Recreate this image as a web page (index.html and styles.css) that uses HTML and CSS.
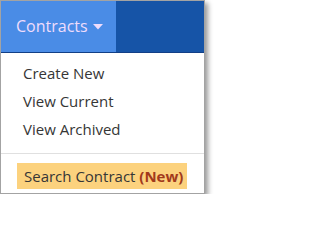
FILE: index.html
```html
<!DOCTYPE html>
<html>
<head>
<meta charset="utf-8">
<link rel="stylesheet" href="styles.css">
</head>
<body>
<div class="frame">
  <div class="navbar">
    <div class="nav-item">
      <span class="nav-label">Contracts</span>
      <svg class="caret" width="10" height="6" viewBox="0 0 10 6"><path d="M0 0H10L5 5.5Z" fill="#efdcfc"/></svg>
    </div>
    <div class="nav-rest"></div>
  </div>
  <ul class="menu">
    <li class="menu-item">Create New</li>
    <li class="menu-item">View Current</li>
    <li class="menu-item">View Archived</li>
  </ul>
  <div class="divider"></div>
  <div class="special">
    <span class="highlight">Search Contract <b class="new">(New)</b></span>
  </div>
</div>
</body>
</html>
```
FILE: styles.css
```css
html, body {
  margin: 0;
  padding: 0;
  background: #ffffff;
}
body {
  font-family: "Open Sans", "DejaVu Sans", sans-serif;
}
.frame {
  width: 203px;
  border: 1px solid #a3a3a3;
  background: #ffffff;
  box-shadow: 3px 3px 5px rgba(0, 0, 0, 0.4);
}
.navbar {
  display: flex;
  height: 51px;
  border-bottom: 1px solid #123f86;
}
.nav-item {
  width: 115px;
  background: #4a8ce6;
  display: flex;
  align-items: center;
  padding-left: 15px;
  box-sizing: border-box;
  gap: 5px;
}
.nav-label {
  color: #efdcfc;
  font-size: 16px;
  line-height: 20px;
  margin-top: -1px;
}
.nav-rest {
  flex: 1;
  background: #1654a7;
}
.menu {
  list-style: none;
  margin: 0;
  padding: 6px 0 0 22px;
}
.menu-item {
  font-size: 15px;
  line-height: 28px;
  color: #363636;
}
.divider {
  margin-top: 10px;
  height: 1px;
  background: #e0e0e0;
}
.special {
  padding: 9px 0 4px 16px;
}
.highlight {
  display: inline-block;
  background: #fcd27e;
  font-size: 15px;
  line-height: 26px;
  padding: 0 4px 0 7px;
  color: #363636;
}
.new {
  color: #a23a1c;
  font-weight: 700;
}
```
